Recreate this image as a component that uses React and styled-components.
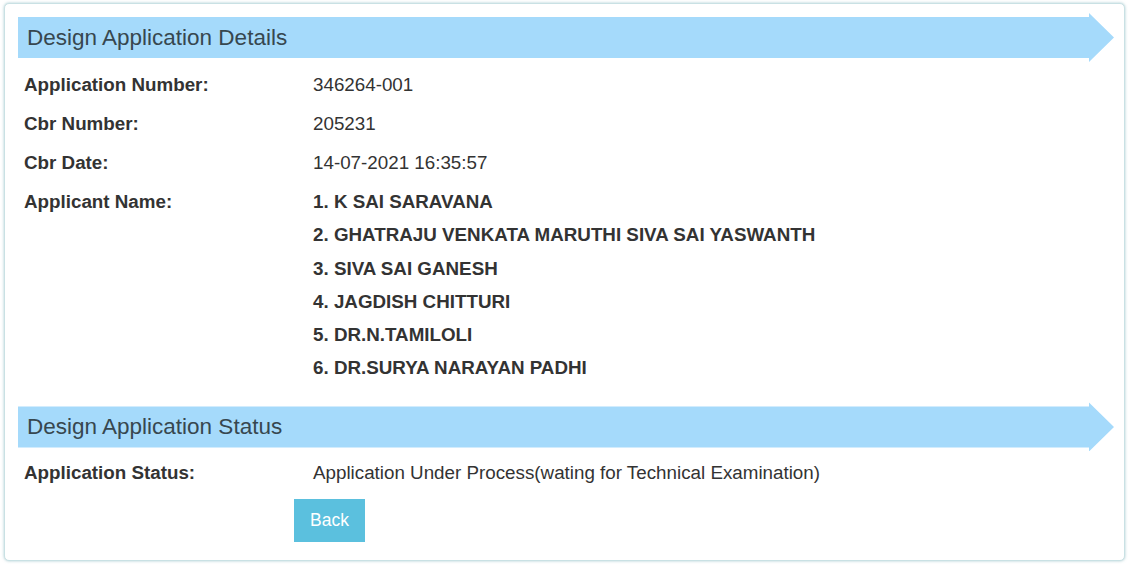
import React from 'react';
import styled, { createGlobalStyle } from 'styled-components';

const GlobalStyle = createGlobalStyle`
  html, body {
    margin: 0;
    padding: 0;
    background: #ffffff;
  }
  body {
    font-family: "Liberation Sans", Arial, sans-serif;
    color: #333333;
  }
`;

const Card = styled.div`
  margin: 3px 5px 4px 4px;
  padding: 9px 10px 18px 13px;
  border: 1px solid #c9e1e4;
  border-radius: 5px;
  box-shadow: 0 0 3px rgba(100, 160, 170, 0.55);
  background: #fff;
`;

const Section = styled.section`
  margin-top: ${props => props.gap || 0}px;
`;

const Heading = styled.h3`
  margin: 0 0 ${props => props.after || 3}px;
  height: 49px;
  display: flex;
  align-items: center;
  padding-left: 9px;
  background: #a5dafb;
  clip-path: polygon(
    0 4px,
    calc(100% - 25px) 4px,
    calc(100% - 25px) 0,
    100% 50%,
    calc(100% - 25px) 100%,
    calc(100% - 25px) 45px,
    0 45px
  );
  font-size: 22.5px;
  font-weight: normal;
  color: #37474f;
`;

const Row = styled.div`
  display: grid;
  grid-template-columns: 289px 1fr;
  padding: 8px 0 8px 6px;
  font-size: 18.8px;
  line-height: 23px;
`;

const Label = styled.div`
  font-weight: bold;
  color: #333;
`;

const Value = styled.div`
  color: #333;
  font-weight: ${props => (props.bold ? 'bold' : 'normal')};
`;

const NameList = styled.div`
  display: flex;
  flex-direction: column;
  gap: 10.3px;
`;

const Actions = styled.div`
  padding: 7px 0 0 276px;
`;

const BackButton = styled.button`
  width: 71px;
  height: 43px;
  border: none;
  border-radius: 0;
  background: #5bc0de;
  color: #fff;
  font-family: "Liberation Sans", Arial, sans-serif;
  font-size: 17.5px;
  cursor: pointer;
`;

const details = [
  ['Application Number:', '346264-001'],
  ['Cbr Number:', '205231'],
  ['Cbr Date:', '14-07-2021 16:35:57'],
];

const applicants = [
  'K SAI SARAVANA',
  'GHATRAJU VENKATA MARUTHI SIVA SAI YASWANTH',
  'SIVA SAI GANESH',
  'JAGDISH CHITTURI',
  'DR.N.TAMILOLI',
  'DR.SURYA NARAYAN PADHI',
];

export default function App() {
  return (
    <>
      <GlobalStyle />
      <Card>
        <Section>
          <Heading>Design Application Details</Heading>
          {details.map(([label, value]) => (
            <Row key={label}>
              <Label>{label}</Label>
              <Value>{value}</Value>
            </Row>
          ))}
          <Row>
            <Label>Applicant Name:</Label>
            <NameList>
              {applicants.map((name, i) => (
                <Value bold key={name}>{`${i + 1}. ${name}`}</Value>
              ))}
            </NameList>
          </Row>
        </Section>
        <Section gap={15}>
          <Heading after={2}>Design Application Status</Heading>
          <Row>
            <Label>Application Status:</Label>
            <Value>Application Under Process(wating for Technical Examination)</Value>
          </Row>
          <Actions>
            <BackButton>Back</BackButton>
          </Actions>
        </Section>
      </Card>
    </>
  );
}
